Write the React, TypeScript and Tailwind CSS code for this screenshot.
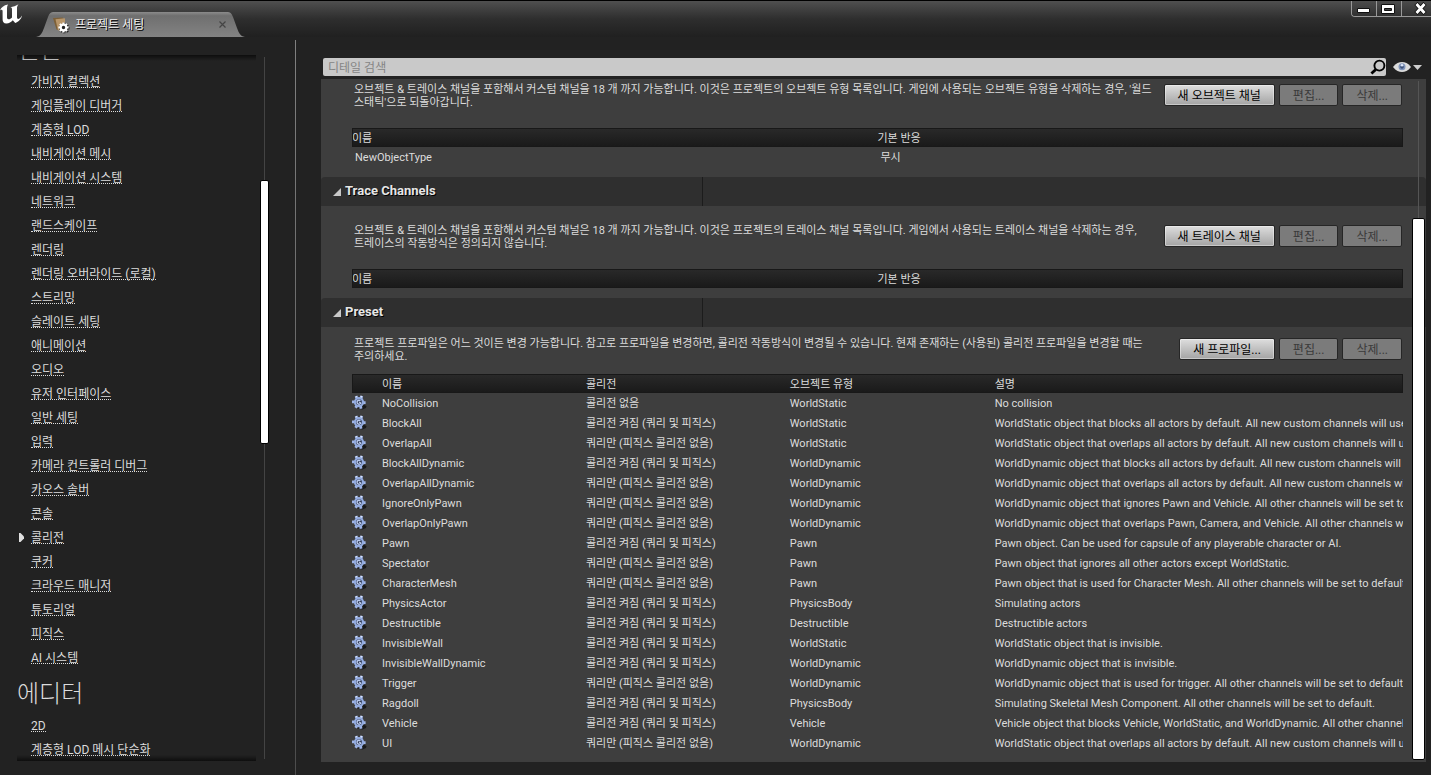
import type { ReactNode } from 'react'

type LinkItem = { label: string; active?: boolean }

type Preset = {
  name: string
  collision: string
  objectType: string
  description: string
}

const ENGINE_LINKS: LinkItem[] = [
  { label: '가비지 컬렉션' },
  { label: '게임플레이 디버거' },
  { label: '계층형 LOD' },
  { label: '내비게이션 메시' },
  { label: '내비게이션 시스템' },
  { label: '네트워크' },
  { label: '랜드스케이프' },
  { label: '렌더링' },
  { label: '렌더링 오버라이드 (로컬)' },
  { label: '스트리밍' },
  { label: '슬레이트 세팅' },
  { label: '애니메이션' },
  { label: '오디오' },
  { label: '유저 인터페이스' },
  { label: '일반 세팅' },
  { label: '입력' },
  { label: '카메라 컨트롤러 디버그' },
  { label: '카오스 솔버' },
  { label: '콘솔' },
  { label: '콜리전', active: true },
  { label: '쿠커' },
  { label: '크라우드 매니저' },
  { label: '튜토리얼' },
  { label: '피직스' },
  { label: 'AI 시스템' },
]

const EDITOR_LINKS: LinkItem[] = [{ label: '2D' }, { label: '계층형 LOD 메시 단순화' }]

const NONE = '콜리전 없음'
const ENABLED = '콜리전 켜짐 (쿼리 및 피직스)'
const QUERY = '쿼리만 (피직스 콜리전 없음)'

const PRESETS: Preset[] = [
  { name: 'NoCollision', collision: NONE, objectType: 'WorldStatic', description: 'No collision' },
  { name: 'BlockAll', collision: ENABLED, objectType: 'WorldStatic', description: 'WorldStatic object that blocks all actors by default. All new custom channels will use its own default response.' },
  { name: 'OverlapAll', collision: QUERY, objectType: 'WorldStatic', description: 'WorldStatic object that overlaps all actors by default. All new custom channels will use its own default response.' },
  { name: 'BlockAllDynamic', collision: ENABLED, objectType: 'WorldDynamic', description: 'WorldDynamic object that blocks all actors by default. All new custom channels will use its own default response.' },
  { name: 'OverlapAllDynamic', collision: QUERY, objectType: 'WorldDynamic', description: 'WorldDynamic object that overlaps all actors by default. All new custom channels will use its own default response.' },
  { name: 'IgnoreOnlyPawn', collision: QUERY, objectType: 'WorldDynamic', description: 'WorldDynamic object that ignores Pawn and Vehicle. All other channels will be set to default.' },
  { name: 'OverlapOnlyPawn', collision: QUERY, objectType: 'WorldDynamic', description: 'WorldDynamic object that overlaps Pawn, Camera, and Vehicle. All other channels will be set to default.' },
  { name: 'Pawn', collision: ENABLED, objectType: 'Pawn', description: 'Pawn object. Can be used for capsule of any playerable character or AI.' },
  { name: 'Spectator', collision: QUERY, objectType: 'Pawn', description: 'Pawn object that ignores all other actors except WorldStatic.' },
  { name: 'CharacterMesh', collision: QUERY, objectType: 'Pawn', description: 'Pawn object that is used for Character Mesh. All other channels will be set to default.' },
  { name: 'PhysicsActor', collision: ENABLED, objectType: 'PhysicsBody', description: 'Simulating actors' },
  { name: 'Destructible', collision: ENABLED, objectType: 'Destructible', description: 'Destructible actors' },
  { name: 'InvisibleWall', collision: ENABLED, objectType: 'WorldStatic', description: 'WorldStatic object that is invisible.' },
  { name: 'InvisibleWallDynamic', collision: ENABLED, objectType: 'WorldDynamic', description: 'WorldDynamic object that is invisible.' },
  { name: 'Trigger', collision: QUERY, objectType: 'WorldDynamic', description: 'WorldDynamic object that is used for trigger. All other channels will be set to default.' },
  { name: 'Ragdoll', collision: ENABLED, objectType: 'PhysicsBody', description: 'Simulating Skeletal Mesh Component. All other channels will be set to default.' },
  { name: 'Vehicle', collision: ENABLED, objectType: 'Vehicle', description: 'Vehicle object that blocks Vehicle, WorldStatic, and WorldDynamic. All other channels will be set to default.' },
  { name: 'UI', collision: QUERY, objectType: 'WorldDynamic', description: 'WorldStatic object that overlaps all actors by default. All new custom channels will use its own default response.' },
]

const HEAD_ROW = 'h-[19px] bg-linear-to-b from-[#2a2a2a] to-[#191919] text-left outline outline-1 -outline-offset-1 outline-[#181818]'

/* ── Icons ─────────────────────────────────────────────── */

const UnrealLogo = () => (
  <svg width="24" height="26" viewBox="0 0 24 26" className="shrink-0" aria-hidden="true">
    <path
      fill="#fff"
      d="M0 9.5C1.2 6.6 3.6 4.4 8 3.6C7.400 4.600 7 5.800 7 7.200V16.200C7 17.400 7.600 18.200 8.600 18.200C9.800 18.200 11 17.400 12 16.400V8.200C12 6.900 11.600 6.200 10.400 6.200C13 5.800 16 5 18.600 3.300C17.200 4.900 17 6 17 7.400V16C17 17.300 17.400 18 18.400 18C19.600 17.800 20.800 16.600 22 14.600C21.400 18 18.800 21 15.200 22L12.800 19.200C11.200 21 9 22.400 6.400 22.400C3.600 22.400 2.600 20.600 2.600 18.200V10.200C2.600 9.200 2.200 8.700 1.500 8.700C0.900 8.700 0.400 9 0 9.500Z"
    />
  </svg>
)

const ProjectIcon = () => (
  <svg width="18" height="18" viewBox="0 0 18 18" className="shrink-0" aria-hidden="true">
    <path fill="#7d6038" d="M1 2L11 1.500L8 14.500L4.500 13.500Z" />
    <path fill="#b8966a" d="M3.500 3.200L13 2.200V12L6 14.500Z" />
    <path
      stroke="#222"
      strokeWidth="2.400"
      d="M12.200 6.800V17.200M7 12.200H17.400M8.500 8.500L16 16M16 8.500L8.500 16"
    />
    <circle cx="11.500" cy="11.500" r="2.800" fill="none" stroke="#fff" strokeWidth="2.200" />
    <path
      stroke="#fff"
      strokeWidth="2"
      d="M11.500 6.400V8.400M11.500 14.600V16.600M6.400 11.500H8.400M14.600 11.500H16.600M7.900 7.900L9.300 9.300M13.700 13.700L15.100 15.100M15.100 7.900L13.700 9.300M9.300 13.700L7.900 15.100"
    />
  </svg>
)

const GearIcon = () => (
  <svg width="16" height="16" viewBox="0 0 16 16" className="block" aria-hidden="true">
    <path fill="#1a1a1a" d="M11 9.500L14.500 11L14 13L10.500 14.500L5 13.500Z" />
    <path
      stroke="#9fb5e6"
      strokeWidth="2.800"
      d="M4 1.200L5.400 4M9.800 0.800L8.800 4M0 6.800H3M13.600 7.600H11M3.600 12.800L5.200 10.200M9 13.800L8.600 10.800"
    />
    <path stroke="#dbe6fb" strokeWidth="1.400" d="M9.400 0.800L9 3M4 1.200L4.600 2.400" />
    <circle cx="7" cy="7.200" r="4" fill="#2c364e" stroke="#93abdf" strokeWidth="2.200" />
    <path fill="none" stroke="#b9c9ee" strokeWidth="1.400" d="M8.400 5.700A2 2 0 1 0 8.800 8.200L7.200 7" />
  </svg>
)

const SearchIcon = () => (
  <svg width="16" height="16" viewBox="0 0 16 16" className="block" aria-hidden="true">
    <circle cx="9.400" cy="6.600" r="5" fill="none" stroke="#000" strokeWidth="1.900" />
    <path stroke="#000" strokeWidth="2.800" d="M5.800 10.400L1.400 14.600" />
  </svg>
)

const EyeIcon = () => (
  <svg width="18" height="12" viewBox="0 0 18 12" aria-hidden="true">
    <path fill="#dcdcdc" d="M0 6C3 2 6 1 9 1C12 1 15 2 18 6C15 10 12 11 9 11C6 11 3 10 0 6Z" />
    <circle cx="9" cy="5.800" r="3.500" fill="#7f94ba" />
    <circle cx="9" cy="6" r="1.800" fill="#3c5078" />
    <circle cx="9" cy="4.200" r="1.200" fill="#dfe8fa" />
  </svg>
)

/* ── Building blocks ───────────────────────────────────── */

const TitleBar = () => (
  <header className="flex h-[37px] shrink-0 items-start border-t border-black bg-linear-to-b from-[#505050] via-[#2e2e2e] to-[#202020]">
    <UnrealLogo />
    <div className="relative ml-3 mt-[11px] flex h-[25px] w-[209px] items-center pl-4 pr-[19px]">
      <svg
        className="absolute inset-0 size-full"
        viewBox="0 0 209 25"
        preserveAspectRatio="none"
        aria-hidden="true"
      >
        <defs>
          <linearGradient id="tab" x1="0" y1="0" x2="0" y2="1">
            <stop offset="0" stopColor="#8b8b8b" />
            <stop offset="0.150" stopColor="#6f6f6f" />
            <stop offset="1" stopColor="#838383" />
          </linearGradient>
        </defs>
        <path
          fill="url(#tab)"
          d="M0 25C5 24 6 21 8 16L12 5C13.500 1 15 0 18 0H191C194 0 195.500 1 197 5L201 16C203 21 204 24 209 25Z"
        />
      </svg>
      <div className="relative flex flex-1 items-center gap-[5px]">
        <ProjectIcon />
        <span className="flex-1 text-xs leading-4 text-[#eee] [text-shadow:1px_1px_0_#000]">프로젝트 세팅</span>
        <button type="button" aria-label="탭 닫기" className="flex h-4 items-center">
          <svg width="7" height="7" viewBox="0 0 7 7" aria-hidden="true">
            <path stroke="#444" strokeWidth="1.200" d="M0.500 0.500L6.500 6.500M6.500 0.500L0.500 6.500" />
          </svg>
        </button>
      </div>
    </div>
    <div className="ml-auto flex h-4 overflow-hidden rounded-bl-sm border-b border-l border-[#999]">
      <WindowButton label="최소화">
        <path fill="#fff" stroke="#111" d="M5.500 7.500H17.500V11.500H5.500Z" />
      </WindowButton>
      <WindowButton label="최대화">
        <path fill="#fff" stroke="#111" d="M4.500 3.500H17.500V12.500H4.500Z" />
        <path fill="#444" stroke="#111" d="M7.500 7.500H14.500V9.500H7.500Z" />
      </WindowButton>
      <WindowButton label="닫기" wide>
        <path stroke="#111" strokeWidth="4.500" d="M14 2.500L23 12.500M23 2.500L14 12.500" />
        <path stroke="#fff" strokeWidth="2.800" d="M14.500 3L22.500 12M22.500 3L14.500 12" />
      </WindowButton>
    </div>
  </header>
)

const WindowButton = ({
  label,
  wide = false,
  children,
}: {
  label: string
  wide?: boolean
  children: ReactNode
}) => (
  <button
    type="button"
    aria-label={label}
    className={`flex h-4 items-start justify-center overflow-hidden bg-linear-to-b from-[#4c4c4c] to-[#2f2f2f] ${
      wide ? 'w-[29px]' : 'w-[25px] border-r border-[#999]'
    }`}
  >
    <svg width={wide ? 29 : 24} height="15" viewBox={wide ? '0 0 29 15' : '0 0 24 15'} className="shrink-0" aria-hidden="true">
      {children}
    </svg>
  </button>
)

const LinkList = ({ items }: { items: LinkItem[] }) => (
  <ul>
    {items.map((item) => (
      <li key={item.label} className="flex h-6 items-start pt-1">
        <span className="flex h-4 w-[14px] items-center pl-[2px]">
          {item.active && (
            <svg width="5" height="9" viewBox="0 0 5 9" aria-hidden="true">
              <path fill="#e0e0e0" d="M0 0H1.500L5 3.500V5.500L1.500 9H0Z" />
            </svg>
          )}
        </span>
        <a href="#" className="border-b border-dotted border-[#ddd] pt-1 text-xs leading-[10px] whitespace-nowrap">
          {item.label}
        </a>
      </li>
    ))}
  </ul>
)

const Sidebar = () => (
  <aside className="flex w-[295px] shrink-0 pb-[14px] pl-[17px] pt-[18px]">
    <nav className="relative w-[239px] overflow-hidden">
      <h2 className="-mt-[30px] h-11 pt-[6px] text-2xl leading-[38px] font-light">엔진</h2>
      <LinkList items={ENGINE_LINKS} />
      <h2 className="h-11 pt-[6px] text-2xl leading-[38px] font-light">에디터</h2>
      <LinkList items={EDITOR_LINKS} />
      <div className="absolute inset-x-0 top-0 h-[6px] bg-linear-to-b from-black/60 to-transparent" />
      <div className="absolute inset-x-0 bottom-0 h-[6px] bg-linear-to-t from-black/60 to-transparent" />
    </nav>
    <div className="ml-1 flex w-[9px] flex-col items-center py-[2px]">
      <div className="w-px flex-[123] bg-[#444]" />
      <div className="w-[9px] flex-[263] rounded-[2px] border border-black bg-white" />
      <div className="w-px flex-[316] bg-[#444]" />
    </div>
  </aside>
)

const ActionButton = ({ children, disabled = false }: { children: ReactNode; disabled?: boolean }) => (
  <button
    type="button"
    disabled={disabled}
    className={`h-[22px] rounded-[2px] border border-[#262626] px-[13px] pt-[2px] text-xs whitespace-nowrap ${
      disabled
        ? 'bg-[#7b7b7b] text-[#3a3a3a]'
        : 'bg-linear-to-b from-[#dedede] to-[#a4a4a4] text-black inset-ring inset-ring-white/40'
    }`}
  >
    {children}
  </button>
)

const SectionHeader = ({ title }: { title: string }) => (
  <h3 className="flex h-[29px] rounded-t-sm bg-[#2f2f2f]">
    <button type="button" className="flex w-[382px] items-center gap-1 border-r border-[#1c1c1c] pl-3">
      <svg width="8" height="8" viewBox="0 0 8 8" aria-hidden="true">
        <path fill="#c8c8c8" d="M8 0V8H0Z" />
      </svg>
      <span className="pb-[2px] text-[13px] font-bold text-[#e6e6e6] [text-shadow:1px_1px_0_#000]">{title}</span>
    </button>
  </h3>
)

const Intro = ({ text, addLabel, className }: { text: ReactNode; addLabel: string; className: string }) => (
  <div className={`flex items-start justify-between gap-2 pl-[33px] pr-6 ${className}`}>
    <p className="pt-px text-[11px] leading-[13px]">{text}</p>
    <div className="flex shrink-0 gap-1 pt-[2px]">
      <ActionButton>{addLabel}</ActionButton>
      <ActionButton disabled>편집...</ActionButton>
      <ActionButton disabled>삭제...</ActionButton>
    </div>
  </div>
)

const ChannelTable = ({ rows }: { rows: Array<{ name: string; response: string }> }) => (
  <div className="pb-[10px] pl-[31px] pr-[23px]">
    <table className="w-full table-fixed text-[11px] leading-4">
      <thead>
        <tr className={HEAD_ROW}>
          <th className="pt-[2px] font-normal">이름</th>
          <th className="pt-[2px] font-normal">기본 반응</th>
        </tr>
      </thead>
      <tbody>
        {rows.map((row) => (
          <tr key={row.name} className="h-5">
            <td className="pl-[3px] pt-[2px]">{row.name}</td>
            <td className="pl-[3px] pt-[2px]">{row.response}</td>
          </tr>
        ))}
      </tbody>
    </table>
  </div>
)

const PresetTable = () => (
  <div className="pb-[9px] pl-[31px] pr-[23px]">
    <table className="w-full table-fixed text-[11px] leading-4 whitespace-nowrap">
      <colgroup>
        <col className="w-[30px]" />
        <col className="w-[19.4%]" />
        <col className="w-[19.4%]" />
        <col className="w-[19.5%]" />
        <col />
      </colgroup>
      <thead>
        <tr className={HEAD_ROW}>
          <th aria-label="아이콘" />
          <th className="pt-[2px] font-normal">이름</th>
          <th className="pt-[2px] font-normal">콜리전</th>
          <th className="pt-[2px] font-normal">오브젝트 유형</th>
          <th className="pt-[2px] font-normal">설명</th>
        </tr>
      </thead>
      <tbody>
        {PRESETS.map((preset) => (
          <tr key={preset.name} className="h-5">
            <td>
              <GearIcon />
            </td>
            <td className="pt-[2px]">{preset.name}</td>
            <td className="pt-[2px]">{preset.collision}</td>
            <td className="pt-[2px]">{preset.objectType}</td>
            <td className="overflow-hidden pt-[2px]">{preset.description}</td>
          </tr>
        ))}
      </tbody>
    </table>
  </div>
)

export default function App() {
  return (
    <div className="flex h-screen flex-col overflow-hidden bg-[#222] font-['Roboto','Noto_Sans_CJK_KR',sans-serif] text-[#dcdcdc]">
      <TitleBar />
      <div className="flex min-h-0 flex-1">
        <Sidebar />
        <div className="mt-[3px] w-px shrink-0 bg-linear-to-b from-[#808080] to-[#4c4c4c]" />
        <main className="flex min-w-0 flex-1 flex-col pb-[13px] pl-[25px] pr-[5px] pt-[21px]">
          <div className="mb-[3px] flex h-[18px] shrink-0 items-center gap-[7px] pl-[2px]">
            <label className="flex h-[18px] flex-1 items-center rounded-[2px] bg-[#c9c9c9] pl-[5px]">
              <input
                type="search"
                aria-label="디테일 검색"
                placeholder="디테일 검색"
                className="min-w-0 flex-1 bg-transparent pt-[2px] text-xs leading-4 text-black outline-none placeholder:text-[#858585]"
              />
              <SearchIcon />
            </label>
            <button type="button" aria-label="보기 옵션" className="mr-1 flex items-center gap-[2px]">
              <EyeIcon />
              <svg width="9" height="5" viewBox="0 0 9 5" aria-hidden="true">
                <path fill="#cfcfcf" d="M0 0H9L4.500 5Z" />
              </svg>
            </button>
          </div>

          <div className="relative min-h-0 flex-1 overflow-hidden bg-[#3e3e3e]">
            <section className="-mt-[14px]">
              <Intro
                className="h-[63px] pt-[17px]"
                addLabel="새 오브젝트 채널"
                text={
                  <>
                    오브젝트 &amp; 트레이스 채널을 포함해서 커스텀 채널을 18 개 까지 가능합니다. 이것은 프로젝트의 오브젝트 유형 목록입니다. 게임에 사용되는 오브젝트 유형을 삭제하는 경우, '월드
                    <br />
                    스태틱'으로 되돌아갑니다.
                  </>
                }
              />
              <ChannelTable rows={[{ name: 'NewObjectType', response: '무시' }]} />
            </section>

            <section>
              <SectionHeader title="Trace Channels" />
              <Intro
                className="h-[63px] pt-[17px]"
                addLabel="새 트레이스 채널"
                text={
                  <>
                    오브젝트 &amp; 트레이스 채널을 포함해서 커스텀 채널은 18 개 까지 가능합니다. 이것은 프로젝트의 트레이스 채널 목록입니다. 게임에서 사용되는 트레이스 채널을 삭제하는 경우,
                    <br />
                    트레이스의 작동방식은 정의되지 않습니다.
                  </>
                }
              />
              <ChannelTable rows={[]} />
            </section>

            <section>
              <SectionHeader title="Preset" />
              <Intro
                className="h-[47px] pt-[9px]"
                addLabel="새 프로파일..."
                text={
                  <>
                    프로젝트 프로파일은 어느 것이든 변경 가능합니다. 참고로 프로파일을 변경하면, 콜리전 작동방식이 변경될 수 있습니다. 현재 존재하는 (사용된) 콜리전 프로파일을 변경할 때는
                    <br />
                    주의하세요.
                  </>
                }
              />
              <PresetTable />
            </section>

            <div className="absolute bottom-[2px] right-[1px] top-[2px] flex w-[13px] flex-col items-center">
              <div className="w-px flex-[137] bg-[#555]" />
              <div className="w-[13px] flex-[542] rounded-[2px] border border-black bg-white" />
            </div>
          </div>
        </main>
      </div>
    </div>
  )
}
